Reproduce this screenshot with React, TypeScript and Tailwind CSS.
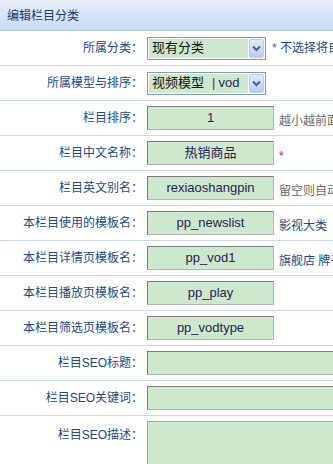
import React from 'react'

const font = "font-['Liberation_Sans','Noto_Sans_CJK_SC',sans-serif]"

function Row({ label, children, tall }: { label: string; children: React.ReactNode; tall?: boolean }) {
  return (
    <div
      className={`flex border-b border-[#c9d8ea] ${tall ? 'items-start h-[120px]' : 'items-center h-[35px]'}`}
    >
      <div
        className={`w-[143px] shrink-0 text-right text-[12px] text-[#1d4a86] whitespace-nowrap ${tall ? 'pt-[10px]' : ''}`}
      >
        {label}
      </div>
      <div className={`flex items-center pl-[4px] whitespace-nowrap ${tall ? 'pt-[5px]' : ''}`}>{children}</div>
    </div>
  )
}

function Input({ value, wide }: { value?: string; wide?: boolean }) {
  return (
    <div
      className={`${wide ? 'w-[220px]' : 'w-[127px]'} h-[24px] shrink-0 bg-[#cde8cd] border border-t-[#7c7c7c] border-l-[#7c7c7c] border-b-[#b4b4b4] border-r-[#b4b4b4] flex items-center justify-center text-[13px] text-[#2b1b58]`}
    >
      {value}
    </div>
  )
}

function Select({ children }: { children: React.ReactNode }) {
  return (
    <div className="w-[119px] h-[23px] shrink-0 border border-[#7f9db9] bg-white p-[1px] flex">
      <div className="flex-1 bg-[#cde8cd] flex items-center pl-[3px] text-[13px] text-[#111] overflow-hidden">
        {children}
      </div>
      <div className="w-[15px] ml-[1px] rounded-[2px] border border-[#b8ccf2] bg-gradient-to-b from-[#e1eafd] to-[#b7ccf6] flex items-center justify-center">
        <svg width="9" height="7" viewBox="0 0 9 7">
          <path d="M1 1.5 L4.5 5 L8 1.5" fill="none" stroke="#4d5f86" strokeWidth="2" />
        </svg>
      </div>
    </div>
  )
}

function Note({ children, color = 'text-[#6b6b6b]' }: { children: React.ReactNode; color?: string }) {
  return <span className={`ml-[5px] mt-[5px] text-[12px] ${color}`}>{children}</span>
}

export default function App() {
  return (
    <div className={`w-[333px] h-[464px] overflow-hidden bg-white ${font}`}>
      <div className="h-[31px] border-t border-[#eef3fa] border-b border-b-[#b3c9e6] bg-gradient-to-b from-[#e6eefa] to-[#c7daf3] flex items-center pl-[7px] text-[12px] text-[#193c6c]">
        编辑栏目分类
      </div>

      <Row label="所属分类：">
        <Select>现有分类</Select>
        <span className="ml-[6px] text-[12px] text-[#1d4a86]">
          <span className="text-[#5560c0]">*</span> 不选择将自动成为顶级分类
        </span>
      </Row>
      <Row label="所属模型与排序：">
        <Select>
          视频模型 <span className="ml-[8px] text-[#7a1080]">|</span>
          <span className="ml-[3px] text-[#2b1b58]">vod</span>
        </Select>
      </Row>
      <Row label="栏目排序：">
        <Input value="1" />
        <Note>越小越前面</Note>
      </Row>
      <Row label="栏目中文名称：">
        <Input value="热销商品" />
        <Note color="text-[#e0202a]">*</Note>
      </Row>
      <Row label="栏目英文别名：">
        <Input value="rexiaoshangpin" />
        <Note>留空则自动转换</Note>
      </Row>
      <Row label="本栏目使用的模板名：">
        <Input value="pp_newslist" />
        <Note color="text-[#1d4a86]">影视大类</Note>
      </Row>
      <Row label="本栏目详情页模板名：">
        <Input value="pp_vod1" />
        <Note color="text-[#1d4a86]">旗舰店 牌子</Note>
      </Row>
      <Row label="本栏目播放页模板名：">
        <Input value="pp_play" />
      </Row>
      <Row label="本栏目筛选页模板名：">
        <Input value="pp_vodtype" />
      </Row>
      <Row label="栏目SEO标题：">
        <Input wide />
      </Row>
      <Row label="栏目SEO关键词：">
        <Input wide />
      </Row>
      <Row label="栏目SEO描述：" tall>
        <div className="w-[220px] h-[90px] bg-[#cde8cd] border border-[#8ea6c6]" />
      </Row>
    </div>
  )
}
